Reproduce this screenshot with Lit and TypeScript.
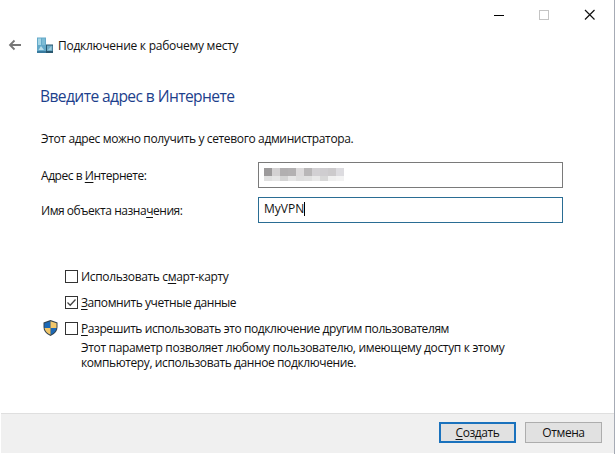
import { LitElement, html, css, svg } from "lit";
import { customElement } from "lit/decorators.js";

const MASK = [
  ["#9c9a9b", "#d3d1d2", "#b1afb0", "#b3b1b2", "#dcdadb", "#b9b7b8", "#d2d0d3", "#cfcdd0", "#cccacc", "#dddce0"],
  ["#e0e0e0", "#e6e6e6", "#d4d4d4", "#e6e6e6", "#dedede", "#e0e0e0", "#e9e9e9", "#d8d8d8", "#f0f0f0", "#f3f3f3"],
];

@customElement("app-root")
export class AppRoot extends LitElement {
  static styles = css`
    :host {
      display: flex; flex-direction: column;
      width: 615px; height: 454px; overflow: hidden; background: #fff; color: #111;
      font: 12px/16px "Open Sans", "Noto Sans", sans-serif;
      letter-spacing: -0.42px;
      white-space: nowrap;
    }
    .window { display: flex; flex-direction: column; height: 454px; border-right: 1px solid #a6abb5; box-sizing: border-box; }
    svg { display: block; flex: none; }
    u { text-underline-offset: 2px; text-decoration-thickness: 1px; text-decoration-skip-ink: none; }
    .controls { display: flex; justify-content: flex-end; height: 30px; }
    .nav { display: flex; align-items: center; height: 30px; padding-left: 8px; letter-spacing: -0.26px; }
    .nav .place { margin: 0 4px 0 15px; }
    .nav span { padding-top: 2px; }
    h1 { font-size: 15.6px; line-height: 22px; font-weight: 400; letter-spacing: -0.6px; color: #1d3f8c; margin: 25px 0 0 40px; }
    .hint { margin: 24px 0 0 41px; letter-spacing: -0.36px; }
    .form { display: grid; grid-template-columns: 217px 305px; row-gap: 9px; margin: 15px 0 0 41px; align-items: center; }
    .form > span { padding-top: 2px; letter-spacing: -0.46px; }
    .field { box-sizing: border-box; height: 26px; border: 1px solid #7a7a7a; padding: 5px; display: flex; }
    .field.active { border-color: #2a6d94; padding-top: 3px; letter-spacing: 0; }
    .caret { width: 1px; height: 14px; background: #000; margin-top: 1px; }
    .mask { display: grid; grid-template-columns: repeat(10, 8px); grid-template-rows: 8px 5px; }
    .options { display: grid; grid-template-columns: 22px 13px 1fr; row-gap: 10px; margin: 45px 0 0 43px; align-items: center; }
    .options label { grid-column: 3; padding-left: 3px; position: relative; top: 1px; }
    .options .card { letter-spacing: -0.35px; }
    .box { grid-column: 2; }
    .note { grid-column: 3; padding-left: 3px; line-height: 15px; margin-top: -6px; letter-spacing: -0.4px; }
    .note .first { letter-spacing: -0.33px; }
    .footer { margin: auto 0 1px 1px; height: 40px; background: #f0f0f0; border-top: 1px solid #dfdfdf; display: flex; justify-content: flex-end; gap: 9px; padding: 8px 12px 0 0; box-sizing: border-box; }
    button { box-sizing: border-box; width: 77px; height: 21px; font: inherit; letter-spacing: inherit; line-height: 17px; padding: 0; background: #e1e1e1; border: 1px solid #adadad; color: #111; }
    button.primary { border: 2px solid #1a72bd; }
  `;

  private checkbox(on: boolean) {
    return html`<svg class="box" width="13" height="13" viewBox="0 0 13 13">
      <rect x=".5" y=".5" width="12" height="12" fill="#fff" stroke="#333" />
      ${on ? svg`<path d="M2.500 6.500 5.200 9.200 10.500 3.500" fill="none" stroke="#444" stroke-width="1.3" />` : ""}
    </svg>`;
  }

  render() {
    return html`<div class="window">
      <div class="controls">
        <svg width="135" height="30" viewBox="0 0 135 30" fill="none">
          <path d="M15 15.500h10" stroke="#000" />
          <rect x="60.500" y="10.500" width="9" height="9" stroke="#c4c4c4" />
          <path d="m106 10 9.500 9.500m0-9.500-9.500 9.500" stroke="#111" stroke-width="1.2" />
        </svg>
      </div>
      <div class="nav">
        <svg width="14" height="14" viewBox="0 0 14 14"><path d="M13 7H2M6.500 2.500 2 7l4.500 4.500" fill="none" stroke="#777" stroke-width="1.8" /></svg>
        <svg class="place" width="17" height="17" viewBox="0 0 17 17">
          <path d="M0 .5h9V16H0z" fill="#64a9c9" />
          <path d="M1 1.500h3V8H1z" fill="#a4d6e6" /><path d="M5 1.500h3V8H5z" fill="#7dbcd5" />
          <path d="M1.500 13 4 9l3 4z" fill="#b9deea" />
          <path d="M0 14h9v2H0z" fill="#397b9f" />
          <path d="M9 7.500h7V16H9z" fill="#28576f" />
          <path d="M10 8.500h5.500V14H10z" fill="#6eabc5" /><path d="m11 13 3.500-4v4z" fill="#a0cddd" />
        </svg>
        <span>Подключение к рабочему месту</span>
      </div>
      <h1>Введите адрес в Интернете</h1>
      <div class="hint">Этот адрес можно получить у сетевого администратора.</div>
      <div class="form">
        <span>Адрес в <u>И</u>нтернете:</span>
        <div class="field"><div class="mask">${MASK.flat().map((c) => html`<i style="background:${c}"></i>`)}</div></div>
        <span>Имя объекта назна<u>ч</u>ения:</span>
        <div class="field active"><span>MyVPN</span><i class="caret"></i></div>
      </div>
      <div class="options">
        ${this.checkbox(false)}<label class="card">Использовать с<u>м</u>арт-карту</label>
        ${this.checkbox(true)}<label><u>З</u>апомнить учетные данные</label>
        <svg width="15" height="16" viewBox="0 0 15 16">
          <path d="M7.500 0 14.500 2.500V7q0 6-7 9-7-3-7-9V2.500z" fill="#33434f" />
          <path d="M7.500 1.200V8H1.500V3.200z M7.500 8h6q-.8 4.500-6 6.800z" fill="#1c68b5" />
          <path d="M7.500 1.200V8h6V3.200z M7.500 8h-6q.8 4.500 6 6.800z" fill="#f2c76a" />
        </svg>
        ${this.checkbox(false)}<label><u>Р</u>азрешить использовать это подключение другим пользователям</label>
        <div class="note">
          <div class="first">Этот параметр позволяет любому пользователю, имеющему доступ к этому</div>
          <div>компьютеру, использовать данное подключение.</div>
        </div>
      </div>
      <div class="footer">
        <button class="primary"><u>С</u>оздать</button>
        <button>Отмена</button>
      </div>
    </div>`;
  }
}
